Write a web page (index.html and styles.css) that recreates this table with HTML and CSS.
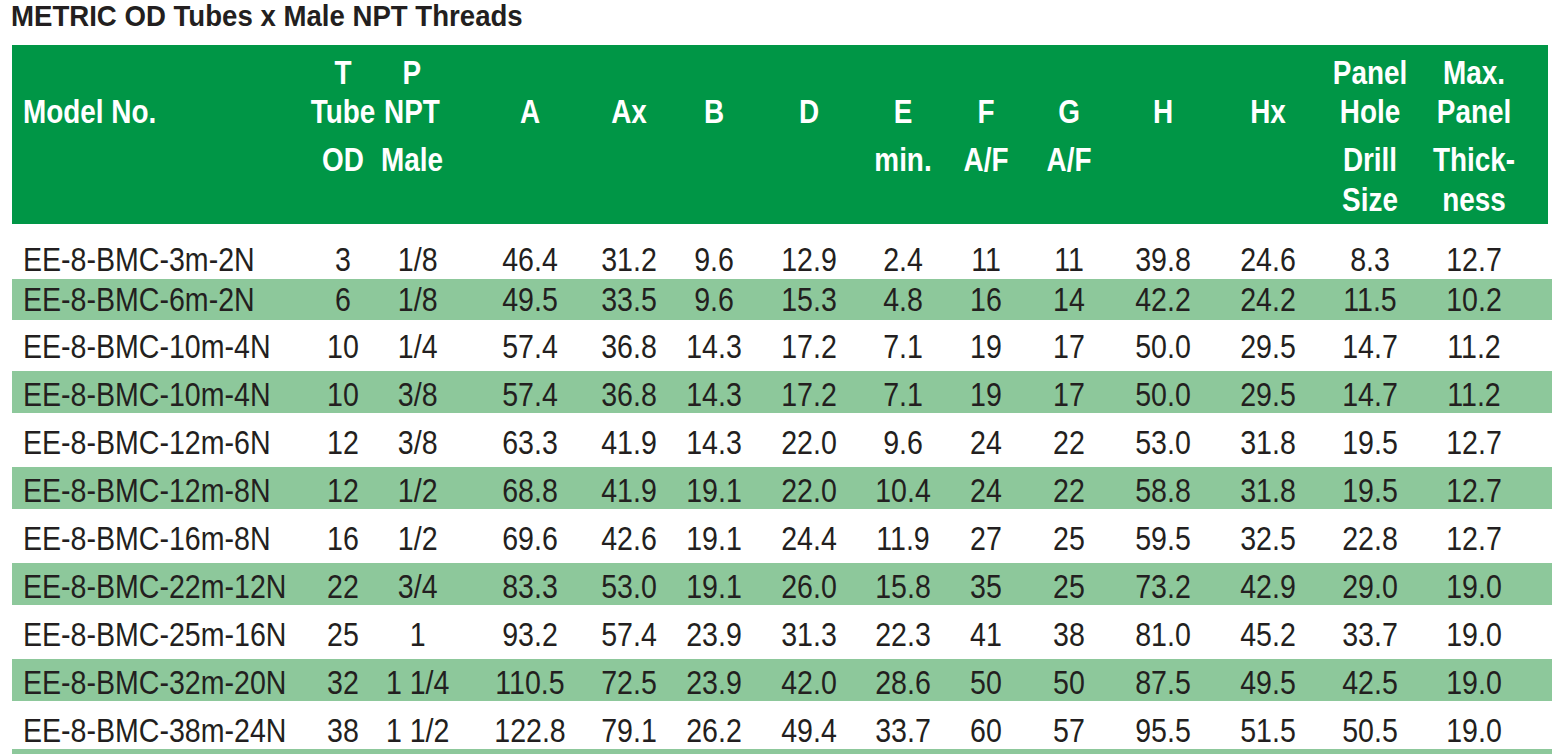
FILE: index.html
```html
<!DOCTYPE html>
<html lang="en">
<head>
<meta charset="utf-8">
<title>METRIC OD Tubes x Male NPT Threads</title>
<link rel="stylesheet" href="styles.css">
</head>
<body>
<h1 class="title">METRIC OD Tubes x Male NPT Threads</h1>
<div class="spec">
  <div class="head">
    <div class="hc first"><span></span><span>Model No.</span><span></span><span></span></div>
    <div class="hc"><span>T</span><span>Tube</span><span>OD</span><span></span></div>
    <div class="hc npt"><span>P</span><span>NPT</span><span>Male</span><span></span></div>
    <div class="hc"><span></span><span>A</span><span></span><span></span></div>
    <div class="hc"><span></span><span>Ax</span><span></span><span></span></div>
    <div class="hc"><span></span><span>B</span><span></span><span></span></div>
    <div class="hc"><span></span><span>D</span><span></span><span></span></div>
    <div class="hc"><span></span><span>E</span><span>min.</span><span></span></div>
    <div class="hc"><span></span><span>F</span><span>A/F</span><span></span></div>
    <div class="hc"><span></span><span>G</span><span>A/F</span><span></span></div>
    <div class="hc"><span></span><span>H</span><span></span><span></span></div>
    <div class="hc"><span></span><span>Hx</span><span></span><span></span></div>
    <div class="hc"><span>Panel</span><span>Hole</span><span>Drill</span><span>Size</span></div>
    <div class="hc"><span>Max.</span><span>Panel</span><span>Thick-</span><span>ness</span></div>
  </div>
  <div class="row r1"><div class="c first">EE-8-BMC-3m-2N</div><div class="c">3</div><div class="c">1/8</div><div class="c">46.4</div><div class="c">31.2</div><div class="c">9.6</div><div class="c">12.9</div><div class="c">2.4</div><div class="c">11</div><div class="c">11</div><div class="c">39.8</div><div class="c">24.6</div><div class="c">8.3</div><div class="c">12.7</div></div>
  <div class="row r2 alt"><div class="c first">EE-8-BMC-6m-2N</div><div class="c">6</div><div class="c">1/8</div><div class="c">49.5</div><div class="c">33.5</div><div class="c">9.6</div><div class="c">15.3</div><div class="c">4.8</div><div class="c">16</div><div class="c">14</div><div class="c">42.2</div><div class="c">24.2</div><div class="c">11.5</div><div class="c">10.2</div></div>
  <div class="row"><div class="c first">EE-8-BMC-10m-4N</div><div class="c">10</div><div class="c">1/4</div><div class="c">57.4</div><div class="c">36.8</div><div class="c">14.3</div><div class="c">17.2</div><div class="c">7.1</div><div class="c">19</div><div class="c">17</div><div class="c">50.0</div><div class="c">29.5</div><div class="c">14.7</div><div class="c">11.2</div></div>
  <div class="row alt"><div class="c first">EE-8-BMC-10m-4N</div><div class="c">10</div><div class="c">3/8</div><div class="c">57.4</div><div class="c">36.8</div><div class="c">14.3</div><div class="c">17.2</div><div class="c">7.1</div><div class="c">19</div><div class="c">17</div><div class="c">50.0</div><div class="c">29.5</div><div class="c">14.7</div><div class="c">11.2</div></div>
  <div class="row"><div class="c first">EE-8-BMC-12m-6N</div><div class="c">12</div><div class="c">3/8</div><div class="c">63.3</div><div class="c">41.9</div><div class="c">14.3</div><div class="c">22.0</div><div class="c">9.6</div><div class="c">24</div><div class="c">22</div><div class="c">53.0</div><div class="c">31.8</div><div class="c">19.5</div><div class="c">12.7</div></div>
  <div class="row alt"><div class="c first">EE-8-BMC-12m-8N</div><div class="c">12</div><div class="c">1/2</div><div class="c">68.8</div><div class="c">41.9</div><div class="c">19.1</div><div class="c">22.0</div><div class="c">10.4</div><div class="c">24</div><div class="c">22</div><div class="c">58.8</div><div class="c">31.8</div><div class="c">19.5</div><div class="c">12.7</div></div>
  <div class="row"><div class="c first">EE-8-BMC-16m-8N</div><div class="c">16</div><div class="c">1/2</div><div class="c">69.6</div><div class="c">42.6</div><div class="c">19.1</div><div class="c">24.4</div><div class="c">11.9</div><div class="c">27</div><div class="c">25</div><div class="c">59.5</div><div class="c">32.5</div><div class="c">22.8</div><div class="c">12.7</div></div>
  <div class="row alt"><div class="c first">EE-8-BMC-22m-12N</div><div class="c">22</div><div class="c">3/4</div><div class="c">83.3</div><div class="c">53.0</div><div class="c">19.1</div><div class="c">26.0</div><div class="c">15.8</div><div class="c">35</div><div class="c">25</div><div class="c">73.2</div><div class="c">42.9</div><div class="c">29.0</div><div class="c">19.0</div></div>
  <div class="row"><div class="c first">EE-8-BMC-25m-16N</div><div class="c">25</div><div class="c">1</div><div class="c">93.2</div><div class="c">57.4</div><div class="c">23.9</div><div class="c">31.3</div><div class="c">22.3</div><div class="c">41</div><div class="c">38</div><div class="c">81.0</div><div class="c">45.2</div><div class="c">33.7</div><div class="c">19.0</div></div>
  <div class="row alt"><div class="c first">EE-8-BMC-32m-20N</div><div class="c">32</div><div class="c">1 1/4</div><div class="c">110.5</div><div class="c">72.5</div><div class="c">23.9</div><div class="c">42.0</div><div class="c">28.6</div><div class="c">50</div><div class="c">50</div><div class="c">87.5</div><div class="c">49.5</div><div class="c">42.5</div><div class="c">19.0</div></div>
  <div class="row last"><div class="c first">EE-8-BMC-38m-24N</div><div class="c">38</div><div class="c">1 1/2</div><div class="c">122.8</div><div class="c">79.1</div><div class="c">26.2</div><div class="c">49.4</div><div class="c">33.7</div><div class="c">60</div><div class="c">57</div><div class="c">95.5</div><div class="c">51.5</div><div class="c">50.5</div><div class="c">19.0</div></div>
  <div class="rule"></div>
</div>
</body>
</html>
```

FILE: styles.css
```css
html, body {
  margin: 0;
  padding: 0;
  background: #ffffff;
}

body {
  font-family: "Liberation Sans", Arial, sans-serif;
  color: #231f20;
  overflow: hidden;
}

.title {
  margin: 0;
  padding: 0 0 0 11px;
  height: 45px;
  font-size: 30px;
  line-height: 32px;
  font-weight: bold;
  color: #231f20;
  white-space: nowrap;
  transform: scaleX(0.92);
  transform-origin: 11px center;
}

.spec {
  margin-left: 12px;
  width: 1540px;
}

.head,
.row {
  display: grid;
  grid-template-columns: 296px 70px 76px 152px 46px 124px 66px 122px 44px 122px 66px 144px 60px 148px;
}

.head {
  width: 1536px;
  box-sizing: border-box;
  height: 179px;
  padding-top: 7px;
  background: #009646;
  color: #ffffff;
  font-weight: bold;
  font-size: 34px;
}

.hc {
  display: flex;
  flex-direction: column;
  align-items: center;
  min-width: 0;
  transform: scaleX(0.82);
  transform-origin: center center;
}

.hc.npt {
  padding-right: 10px;
}

.hc span {
  display: flex;
  justify-content: center;
  white-space: nowrap;
  line-height: 40px;
  height: 40px;
}

.hc span:nth-child(1) { height: 39px; }
.hc span:nth-child(2) { height: 48px; }
.hc span:nth-child(3) { height: 40px; }
.hc span:nth-child(4) { height: 40px; }

.hc.first {
  align-items: flex-start;
  padding-left: 11px;
  transform-origin: 11px center;
}

.row {
  height: 48px;
  box-sizing: border-box;
  padding-top: 5px;
  font-size: 34px;
  line-height: 42px;
}

.row.r1 { padding-top: 14px; }
.row.r2 { padding-top: 6px; }
.row.last { height: 45px; }

.row.alt {
  background: linear-gradient(to bottom, transparent 3px, #8dc89b 3px, #8dc89b 45px, transparent 45px);
}

.row.r2.alt {
  background: linear-gradient(to bottom, transparent 7px, #8dc89b 7px);
}

.c {
  display: flex;
  justify-content: center;
  white-space: nowrap;
  min-width: 0;
  transform: scaleX(0.84);
  transform-origin: center center;
}

.c:nth-child(3) {
  padding-left: 4px;
}

.c.first {
  justify-content: flex-start;
  padding-left: 11px;
  transform-origin: 11px center;
}

.rule {
  height: 5px;
  background: #8dc89b;
}
```
